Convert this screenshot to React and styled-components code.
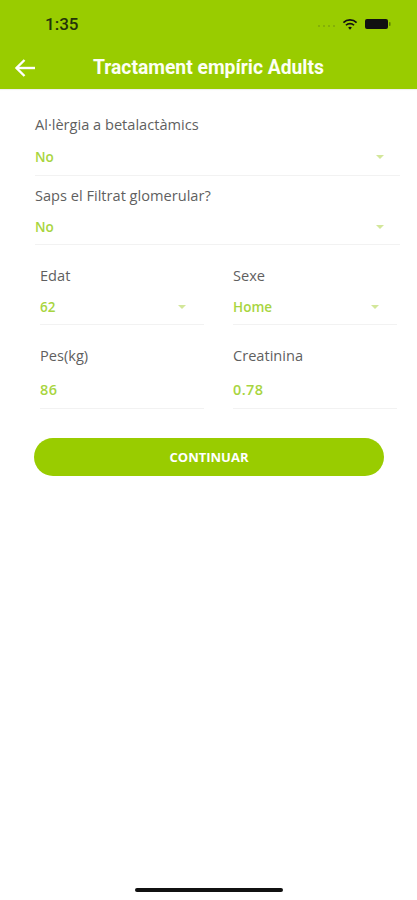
import React from 'react';
import styled, { createGlobalStyle } from 'styled-components';

const GREEN = '#99cc00';

const GlobalStyle = createGlobalStyle`
  html, body {
    margin: 0;
    padding: 0;
    background: #fff;
  }
`;

const Screen = styled.div`
  position: relative;
  width: 417px;
  height: 900px;
  overflow: hidden;
  background: #fff;
  font-family: 'Open Sans', sans-serif;
`;

const Header = styled.header`
  height: 89px;
  background: ${GREEN};
  display: flex;
  flex-direction: column;
  box-shadow: 0 1px 1px rgba(0, 0, 0, 0.06);
`;

const StatusBar = styled.div`
  height: 48px;
  display: flex;
  align-items: center;
  justify-content: space-between;
  padding: 0 26px 0 45px;
`;

const Clock = styled.span`
  font-family: Roboto, sans-serif;
  font-size: 17px;
  font-weight: 500;
  color: #24330a;
`;

const StatusIcons = styled.div`
  display: flex;
  align-items: center;
  gap: 7px;
`;

const TitleBar = styled.div`
  height: 39px;
  display: flex;
  align-items: center;
  padding-left: 14px;
`;

const Title = styled.h1`
  margin: 0 0 0 57px;
  font-family: Roboto, sans-serif;
  font-size: 19.3px;
  font-weight: 700;
  white-space: nowrap;
  color: #fdfff5;
`;

const Form = styled.main`
  padding: 26px 17px 0 35px;
  display: flex;
  flex-direction: column;
`;

const Field = styled.div`
  display: flex;
  flex-direction: column;
  margin-top: ${(p) => p.$top || 0}px;
`;

const Label = styled.label`
  font-size: 14.6px;
  line-height: 18px;
  color: #5f5f5f;
`;

const Value = styled.div`
  height: ${(p) => p.$height}px;
  display: flex;
  align-items: center;
  justify-content: space-between;
  padding: 6px ${(p) => p.$pad || 16}px 0 0;
  border-bottom: 1px solid #f2f2f2;
  box-sizing: border-box;
  font-size: ${(p) => p.$size || 13.5}px;
  font-weight: 600;
  letter-spacing: ${(p) => (p.$size ? '0.4px' : '0')};
  color: #a8d53f;
`;

const Caret = styled.span`
  width: 0;
  height: 0;
  border-left: 4px solid transparent;
  border-right: 4px solid transparent;
  border-top: 4px solid #d3e79a;
`;

const Columns = styled.div`
  display: grid;
  grid-template-columns: 164px 164px;
  column-gap: 29px;
  row-gap: 21px;
  margin-top: 21px;
  padding-left: 5px;
`;

const Button = styled.button`
  width: 350px;
  height: 38px;
  margin: 29px 0 0 -1px;
  padding: 0;
  border: none;
  border-radius: 19px;
  background: ${GREEN};
  color: #fff;
  font-family: 'Open Sans', sans-serif;
  font-size: 13px;
  font-weight: 700;
`;

const HomeBar = styled.div`
  position: absolute;
  left: 135px;
  top: 888px;
  width: 148px;
  height: 4px;
  border-radius: 2px;
  background: #111;
`;

const Select = ({ label, value, height, pad, top }) => (
  <Field $top={top}>
    <Label>{label}</Label>
    <Value $height={height} $pad={pad}>
      {value}
      <Caret />
    </Value>
  </Field>
);

const Input = ({ label, value }) => (
  <Field>
    <Label>{label}</Label>
    <Value $height={45} $size={14.5}>
      {value}
    </Value>
  </Field>
);

export default function App() {
  return (
    <Screen>
      <GlobalStyle />
      <Header>
        <StatusBar>
          <Clock>1:35</Clock>
          <StatusIcons>
            <svg width="18" height="12" viewBox="0 0 18 12">
              <circle cx="2" cy="8" r="1" fill="#7fa80a" />
              <circle cx="7" cy="8" r="1" fill="#7fa80a" />
              <circle cx="12" cy="8" r="1" fill="#7fa80a" />
              <circle cx="17" cy="8" r="1" fill="#7fa80a" />
            </svg>
            <svg width="16" height="13" viewBox="0 0 17 13" fill="none" stroke="#111" strokeWidth="1.8">
              <path d="M1.5 4.5a10 10 0 0 1 14 0" />
              <path d="M4.2 7.3a6.2 6.2 0 0 1 8.6 0" />
              <path d="M8.5 12l-2-2.2a2.8 2.8 0 0 1 4 0z" fill="#111" stroke="none" />
            </svg>
            <svg width="26" height="12" viewBox="0 0 26 12">
              <rect x="0" y="1" width="23" height="10" rx="2" fill="#111" />
              <rect x="24" y="4" width="1.5" height="4" rx="0.7" fill="#5b7a00" />
            </svg>
          </StatusIcons>
        </StatusBar>
        <TitleBar>
          <svg width="22" height="20" viewBox="0 0 22 20" fill="none" stroke="#fff" strokeWidth="2.4">
            <path d="M21 10H2.5" />
            <path d="M10.5 2 2.5 10l8 8" />
          </svg>
          <Title>Tractament empíric Adults</Title>
        </TitleBar>
      </Header>
      <Form>
        <Select label="Al·lèrgia a betalactàmics" value="No" height={43} />
        <Select label="Saps el Filtrat glomerular?" value="No" height={41} top={10} />
        <Columns>
          <Select label="Edat" value="62" height={41} pad={18} />
          <Select label="Sexe" value="Home" height={41} pad={18} />
          <Input label="Pes(kg)" value="86" />
          <Input label="Creatinina" value="0.78" />
        </Columns>
        <Button>CONTINUAR</Button>
      </Form>
      <HomeBar />
    </Screen>
  );
}
